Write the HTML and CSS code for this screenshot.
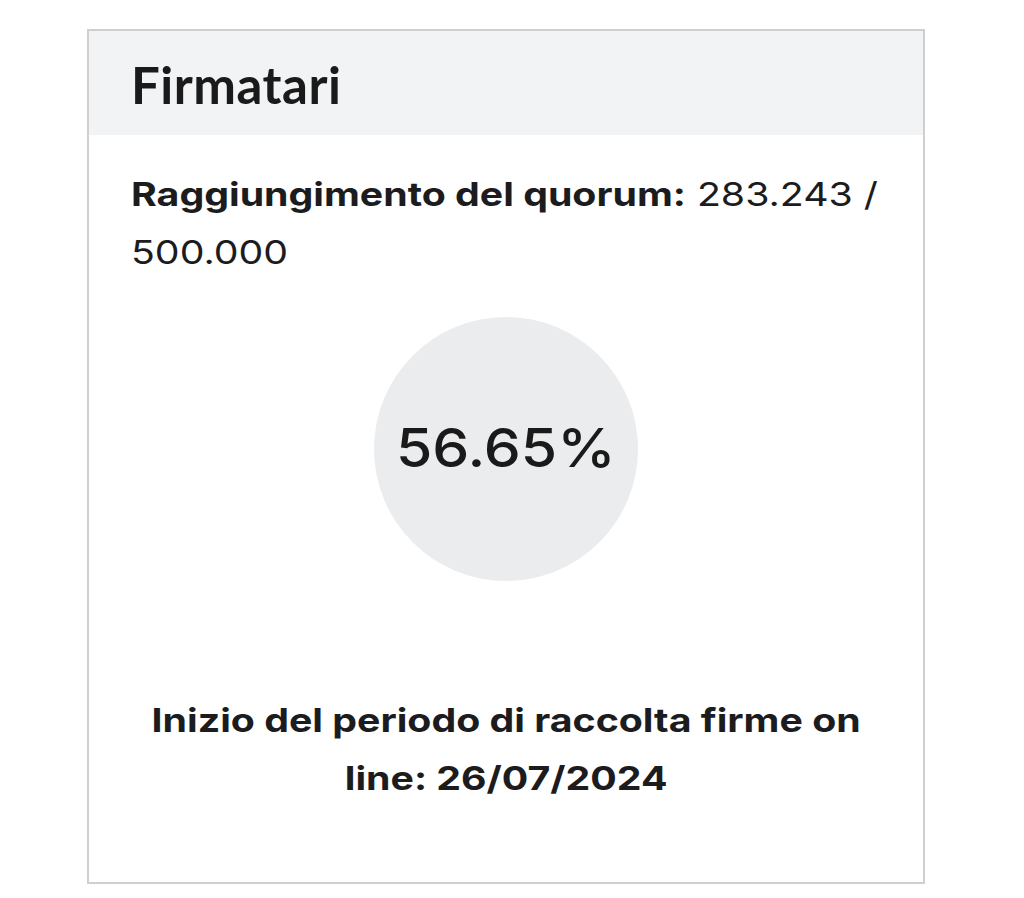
FILE: index.html
```html
<!DOCTYPE html>
<html lang="it">
<head>
<meta charset="utf-8">
<title>Firmatari</title>
<link rel="stylesheet" href="styles.css">
</head>
<body>
<div class="card">
  <div class="card-header">
    <h2 class="card-title">Firmatari</h2>
  </div>
  <div class="card-body">
    <p class="quorum wide"><strong>Raggiungimento del quorum:</strong> 283.243 / 500.000</p>
    <div class="circle-wrap">
      <div class="circle"><span class="percent">56.65%</span></div>
    </div>
    <p class="start wide"><strong>Inizio del periodo di raccolta firme on line: 26/07/2024</strong></p>
  </div>
</div>
</body>
</html>
```
FILE: styles.css
```css
html, body {
  margin: 0;
  padding: 0;
  background: #ffffff;
}
body {
  padding: 29px 0 0 87px;
  font-family: Inter, Roboto, "Liberation Sans", sans-serif;
  color: #1c1c1e;
}
.card {
  width: 834px;
  border: 2px solid #cfcfcf;
  background: #fff;
}
.card-header {
  background: #f2f3f5;
  height: 104px;
  padding: 0 42px;
  box-sizing: border-box;
  display: flex;
  align-items: center;
}
.card-title {
  margin: 0;
  font-family: Lato, "Open Sans", sans-serif;
  font-weight: 700;
  font-size: 51px;
  line-height: 60px;
  color: #1a1a1a;
  padding-top: 4px;
  letter-spacing: 0.5px;
}
.card-body {
  padding: 30px 42px 75px;
}
/* the reference face is a wide sans: widen Inter horizontally, keeping wrap points */
.wide {
  width: calc(100% / 1.19);
  transform: scaleX(1.19);
}
.quorum {
  margin: 0;
  font-size: 33px;
  line-height: 58px;
  transform-origin: left top;
}
.quorum strong {
  font-weight: 700;
}
.circle-wrap {
  display: flex;
  justify-content: center;
  margin-top: 36px;
}
.circle {
  width: 264px;
  height: 264px;
  border-radius: 50%;
  background: #ebecee;
  display: flex;
  align-items: center;
  justify-content: center;
}
.percent {
  display: inline-block;
  font-size: 54px;
  font-weight: 500;
  color: #1a1a1a;
  transform: scaleX(1.09);
  margin-top: -4px;
}
.start {
  margin: 110px auto 0;
  text-align: center;
  font-size: 33px;
  line-height: 58px;
  transform-origin: center top;
}
.start strong {
  font-weight: 700;
}
```
